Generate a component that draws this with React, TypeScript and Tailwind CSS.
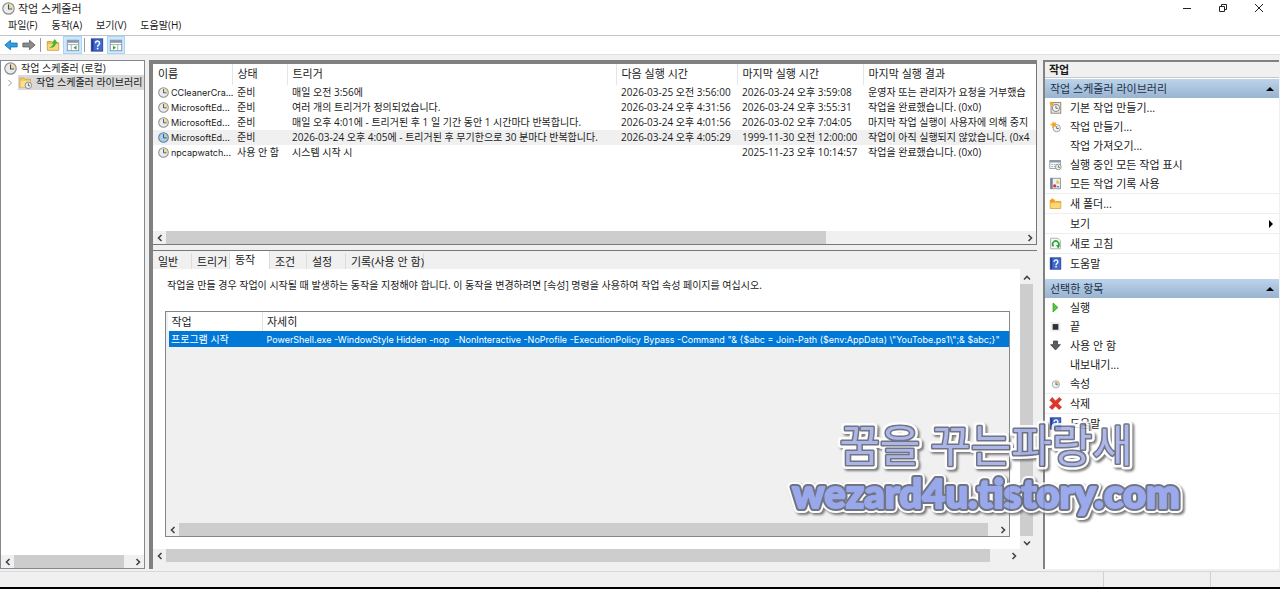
import React from "react";
import clsx from "clsx";

type IconName =
  | "clock"
  | "clockBlue"
  | "clockNew"
  | "clockSmall"
  | "wizard"
  | "folderClock"
  | "folderNew"
  | "folderUp"
  | "running"
  | "history"
  | "refresh"
  | "help"
  | "play"
  | "stop"
  | "disable"
  | "remove"
  | "back"
  | "forward"
  | "paneLeft"
  | "paneRight";

type Task = {
  name: string;
  status: string;
  trigger: string;
  next: string;
  last: string;
  result: string;
  selected?: boolean;
};

type Action = {
  label: string;
  icon?: IconName;
  line?: boolean;
  submenu?: boolean;
};

const tasks: Task[] = [
  {
    name: "CCleanerCra...",
    status: "준비",
    trigger: "매일 오전 3:56에",
    next: "2026-03-25 오전 3:56:00",
    last: "2026-03-24 오후 3:59:08",
    result: "운영자 또는 관리자가 요청을 거부했습",
  },
  {
    name: "MicrosoftEd...",
    status: "준비",
    trigger: "여러 개의 트리거가 정의되었습니다.",
    next: "2026-03-24 오후 4:31:56",
    last: "2026-03-24 오후 3:55:31",
    result: "작업을 완료했습니다. (0x0)",
  },
  {
    name: "MicrosoftEd...",
    status: "준비",
    trigger: "매일 오후 4:01에 - 트리거된 후 1 일 기간 동안 1 시간마다 반복합니다.",
    next: "2026-03-24 오후 4:01:56",
    last: "2026-03-02 오후 7:04:05",
    result: "마지막 작업 실행이 사용자에 의해 중지",
  },
  {
    name: "MicrosoftEd...",
    status: "준비",
    trigger: "2026-03-24 오후 4:05에 - 트리거된 후 무기한으로 30 분마다 반복합니다.",
    next: "2026-03-24 오후 4:05:29",
    last: "1999-11-30 오전 12:00:00",
    result: "작업이 아직 실행되지 않았습니다. (0x4",
    selected: true,
  },
  {
    name: "npcapwatch...",
    status: "사용 안 함",
    trigger: "시스템 시작 시",
    next: "",
    last: "2025-11-23 오후 10:14:57",
    result: "작업을 완료했습니다. (0x0)",
  },
];

const columns = [
  "이름",
  "상태",
  "트리거",
  "다음 실행 시간",
  "마지막 실행 시간",
  "마지막 실행 결과",
];

const libraryActions: Action[] = [
  { label: "기본 작업 만들기...", icon: "wizard" },
  { label: "작업 만들기...", icon: "clockNew" },
  { label: "작업 가져오기..." },
  { label: "실행 중인 모든 작업 표시", icon: "running" },
  { label: "모든 작업 기록 사용", icon: "history" },
  { label: "새 폴더...", icon: "folderNew", line: true },
  { label: "보기", line: true, submenu: true },
  { label: "새로 고침", icon: "refresh", line: true },
  { label: "도움말", icon: "help", line: true },
];

const itemActions: Action[] = [
  { label: "실행", icon: "play" },
  { label: "끝", icon: "stop" },
  { label: "사용 안 함", icon: "disable" },
  { label: "내보내기..." },
  { label: "속성", icon: "clockSmall" },
  { label: "삭제", icon: "remove", line: true },
  { label: "도움말", icon: "help", line: true },
];

const tabs = [
  { label: "일반", width: "w-[39px]" },
  { label: "트리거", width: "w-[38px]" },
  { label: "동작", width: "w-[40px]" },
  { label: "조건", width: "w-[37px]" },
  { label: "설정", width: "w-[39px]" },
  { label: "기록(사용 안 함)", width: "w-[78px]" },
];

const folderPath = "M1.5 4h5l1.5 1.5h6.500V14h-13z";

const drawings: Record<IconName, React.ReactNode> = {
  clock: (
    <>
      <circle cx="8" cy="8" r="7" fill="#e9ebec" stroke="#8c9094" strokeWidth="1.500" />
      <path d="M8 8V2.500A5.500 5.500 0 0 1 13.500 8z" fill="#f3dd8c" />
      <path d="M8 3v5.500h4.500" fill="none" stroke="#4a4f55" strokeWidth="1.300" />
    </>
  ),
  clockBlue: (
    <>
      <circle cx="8" cy="8" r="7" fill="#a9cdea" stroke="#5d7f9e" strokeWidth="1.500" />
      <path d="M8 8V2.500A5.500 5.500 0 0 1 13.500 8z" fill="#b8cfa8" />
      <path d="M8 3v5.500h4.500" fill="none" stroke="#2c4d70" strokeWidth="1.300" />
    </>
  ),
  clockNew: (
    <>
      <circle cx="9.500" cy="10" r="4.500" fill="#f0f1f2" stroke="#8f959b" />
      <path d="M9.500 7.500v3h2.500" fill="none" stroke="#4d5359" />
      <path d="M4.500 1.500l1.500 2 3-.5L8 6l1.500 2.500-3-.5L4 10V7L1 5l3-.5z" fill="#f2a526" />
    </>
  ),
  clockSmall: (
    <>
      <circle cx="8.500" cy="9" r="4.500" fill="#eff1f2" stroke="#9aa0a5" />
      <path d="M9 9V5.500A3.500 3.500 0 0 1 12 9z" fill="#f0bd58" />
      <path d="M8.500 6v3.500h3" fill="none" stroke="#4d6b8a" />
    </>
  ),
  wizard: (
    <>
      <rect x="2.500" y="2" width="12" height="13" fill="#f4ead8" stroke="#7e6d63" />
      <circle cx="8.500" cy="8.500" r="4.500" fill="#f6f8fa" stroke="#7f858b" strokeWidth="1.200" />
      <path d="M8.500 5.500v3.500h2.500" fill="none" stroke="#444a52" />
      <path d="M.5 1.500l3-1 2.500 2-1.500 3-3-.5z" fill="#f2a526" />
    </>
  ),
  folderClock: (
    <>
      <path d="M1 2.500h5l1.500 1.500H14v10H1z" fill="#f0c963" stroke="#d3a43a" />
      <path d="M2 6h12v8H2z" fill="#fbe08f" />
      <circle cx="11.500" cy="11.500" r="4" fill="#eef1f3" stroke="#74797e" />
      <path d="M11.500 9v3h2" fill="none" stroke="#3c4956" />
    </>
  ),
  folderNew: (
    <>
      <path d={folderPath} fill="#f4bd45" stroke="#d59a2b" />
      <path d="M2 7.500h12V13.500H2z" fill="#fbd777" />
      <path d="M4 1l1 2 2-.5-1 2 1 1.500-2.500 0L3 7.500 2.500 5.500.5 4.500 2.500 3.500z" fill="#f59b1c" />
    </>
  ),
  folderUp: (
    <>
      <path d={folderPath} fill="#eebf55" stroke="#c99a38" />
      <path d="M2 7h12v6.500H2z" fill="#f8d880" />
      <path d="M3.500 11c2.500-.5 4.500-2.500 5-5H6.500L10 1l3.500 5h-2c-.5 3.500-3.500 6-8 5z" fill="#45b52c" />
    </>
  ),
  running: (
    <>
      <rect x="1" y="3" width="13" height="10" fill="#f7f8f9" stroke="#8a9097" />
      <path d="M1 3h13v2.500H1z" fill="#8c96a3" />
      <path d="M3 8h2M6 8h2M3 10.500h2M6 10.500h2" stroke="#9aa1a8" />
      <circle cx="11.500" cy="11" r="3.500" fill="#eef3ea" stroke="#7f858b" />
      <path d="M11.500 9v2.500h2" fill="none" stroke="#3e7a3b" />
    </>
  ),
  history: (
    <>
      <rect x="2" y="1.500" width="12" height="13" fill="#edf2f8" stroke="#7b8796" />
      <path d="M2 1.500h2.500v13H2z" fill="#6c7f98" />
      <path d="M10 3l3.500 5h-5z" fill="#f2bd32" />
      <circle cx="7" cy="11" r="2" fill="#d23c2f" />
      <path d="M9.500 12h3" stroke="#5275ab" strokeWidth="1.500" />
    </>
  ),
  refresh: (
    <>
      <path d="M2 1.500h9l3 3v10H2z" fill="#f5faf4" stroke="#9ba69b" />
      <path d="M5.500 11.500a3.800 3.800 0 1 1 5.500 0" fill="none" stroke="#2fa33a" strokeWidth="2" />
      <path d="M8.500 10h5l-2 4z" fill="#2fa33a" />
    </>
  ),
  help: (
    <>
      <rect x="1.500" y="1" width="13" height="14" fill="#3f6bd0" stroke="#2b3f8f" />
      <path d="M2 1.500h2v13H2z" fill="#24398c" />
      <path d="M6.300 6a2.300 2.300 0 1 1 3.700 1.700C9 8.400 8.700 8.900 8.700 10" fill="none" stroke="#fff" strokeWidth="1.700" />
      <path d="M7.800 11.200h1.800v1.800H7.800z" fill="#fff" />
    </>
  ),
  play: <path d="M5 2.500v11l6-5.500z" fill="#5cc53c" stroke="#319b22" />,
  stop: (
    <>
      <rect x="2" y="2.500" width="12" height="11.500" fill="#eceeef" />
      <rect x="4.500" y="5" width="7" height="7" fill="#2e3236" />
    </>
  ),
  disable: <path d="M5.500 2.500h5V7h3.500l-6 6.500L2 7h3.500z" fill="#5b5d60" stroke="#3d3f42" strokeLinejoin="round" />,
  remove: (
    <path
      d="M1 4L4 .5 8 5l4.500-4.500L15.500 3 11 8l4.500 4.500L12.500 15.500 8 11 4 15.500.5 12.500 5 8z"
      fill="#e03426"
      stroke="#b3211a"
      strokeWidth=".6"
    />
  ),
  back: <path d="M1 8l6.500-5.500v3.300H15v4.400H7.500v3.300z" fill="#2f9fe0" stroke="#1875b8" strokeLinejoin="round" />,
  forward: <path d="M15 8L8.500 2.500v3.300H1v4.400h7.500v3.300z" fill="#8b8b8b" stroke="#666" strokeLinejoin="round" />,
  paneLeft: (
    <>
      <rect x="1.500" y="2.500" width="13" height="12" fill="#fff" stroke="#82909f" />
      <path d="M1.500 2.500h13v3h-13z" fill="#8796a8" />
      <path d="M2 7.500h12M6 7.500v7" stroke="#9ba7b3" />
      <path d="M12 8.500v5L8.500 11z" fill="#3da32b" />
    </>
  ),
  paneRight: (
    <>
      <rect x="1.500" y="2.500" width="13" height="12" fill="#fff" stroke="#82909f" />
      <path d="M1.500 2.500h13v3h-13z" fill="#8796a8" />
      <path d="M2 7.500h12M10 7.500v7" stroke="#9ba7b3" />
      <path d="M4.500 8.500v5L8 11z" fill="#3da32b" />
    </>
  ),
};

const Icon = ({ name, className = "size-3" }: { name: IconName; className?: string }) => (
  <svg viewBox="0 0 16 16" className={clsx("shrink-0", className)} aria-hidden="true">
    {drawings[name]}
  </svg>
);

const arrowTurn = {
  left: "",
  right: "rotate-180",
  up: "rotate-90",
  down: "-rotate-90",
};

const ScrollButton = ({ dir, label }: { dir: keyof typeof arrowTurn; label: string }) => (
  <button aria-label={label} className="flex size-[13px] shrink-0 items-center justify-center">
    <svg viewBox="0 0 8 8" className={clsx("size-2", arrowTurn[dir])}>
      <path d="M5.500 1L2.500 4l3 3" fill="none" stroke="#444" strokeWidth="1.600" />
    </svg>
  </button>
);

const HScroll = ({ thumb }: { thumb: string }) => (
  <div className="flex h-[13px] shrink-0 bg-[#f0f0f0]">
    <ScrollButton dir="left" label="왼쪽으로" />
    <div className="flex-1">
      <div className={clsx("h-full bg-[#cdcdcd]", thumb)} />
    </div>
    <ScrollButton dir="right" label="오른쪽으로" />
  </div>
);

const TitleBar = () => (
  <header className="flex h-4 shrink-0 items-center justify-between pr-[3px] pl-[2px]">
    <h1 className="flex items-center gap-[3px] text-[11px]">
      <Icon name="clock" className="size-[13px]" />
      작업 스케줄러
    </h1>
    <div className="flex">
      <button aria-label="최소화" className="flex h-4 w-9 items-center justify-center">
        <svg viewBox="0 0 10 10" className="size-[10px]">
          <path d="M1 5.500h8" stroke="#222" />
        </svg>
      </button>
      <button aria-label="이전 크기로" className="flex h-4 w-9 items-center justify-center">
        <svg viewBox="0 0 10 10" className="size-[10px]" fill="none" stroke="#222">
          <path d="M1.500 3.500h5v5h-5zM3.500 3.500v-2h5v5h-2" />
        </svg>
      </button>
      <button aria-label="닫기" className="flex h-4 w-9 items-center justify-center">
        <svg viewBox="0 0 10 10" className="size-[10px]">
          <path d="M1 1l8 8M9 1L1 9" stroke="#222" />
        </svg>
      </button>
    </div>
  </header>
);

const Toolbar = () => (
  <div className="flex h-5 shrink-0 items-center border-y border-[#c4c4c4] border-b-[#e2e2e2] pl-[2px]">
    <button aria-label="뒤로" className="flex w-[18px] justify-center">
      <Icon name="back" className="size-[14px]" />
    </button>
    <button aria-label="앞으로" className="flex w-[18px] justify-center">
      <Icon name="forward" className="size-[14px]" />
    </button>
    <span className="mx-[2px] h-[14px] w-px bg-[#999]" />
    <button aria-label="위로" className="flex w-5 justify-center">
      <Icon name="folderUp" className="size-[14px]" />
    </button>
    <button
      aria-label="콘솔 트리 표시/숨기기"
      className="flex h-[18px] w-[19px] items-center justify-center border border-[#a9d5f7] bg-[#cce8ff]"
    >
      <Icon name="paneLeft" className="size-[14px]" />
    </button>
    <span className="mx-[2px] h-[14px] w-px bg-[#999]" />
    <button aria-label="도움말" className="flex w-5 justify-center">
      <Icon name="help" className="size-[14px]" />
    </button>
    <button
      aria-label="작업 창 표시/숨기기"
      className="flex h-[18px] w-[18px] items-center justify-center border border-[#a9d5f7] bg-[#cce8ff]"
    >
      <Icon name="paneRight" className="size-[14px]" />
    </button>
  </div>
);

const Tree = () => (
  <nav className="flex w-[145px] shrink-0 flex-col border border-[#828790] bg-white">
    <div className="flex h-[14px] items-center gap-1 pl-[3px]">
      <Icon name="clock" className="size-[13px]" />
      <span>작업 스케줄러 (로컬)</span>
    </div>
    <div className="flex h-[15px] items-center whitespace-nowrap">
      <button aria-label="펼치기" className="flex w-[17px] shrink-0 justify-center">
        <svg viewBox="0 0 8 8" className="size-2">
          <path d="M2.500 1l3 3-3 3" fill="none" stroke="#999" />
        </svg>
      </button>
      <div className="flex h-full flex-1 items-center gap-1 bg-[#d9d9d9] pl-px">
        <Icon name="folderClock" className="size-[13px]" />
        <span>작업 스케줄러 라이브러리</span>
      </div>
    </div>
    <div className="flex-1" />
    <HScroll thumb="w-[94%]" />
  </nav>
);

const TaskList = () => (
  <section className="flex h-[181px] shrink-0 flex-col border-r border-b border-[#777] bg-white">
    <div className="flex-1 overflow-hidden">
      <table className="w-full table-fixed border-collapse text-left whitespace-nowrap">
        <colgroup>
          <col className="w-[79px]" />
          <col className="w-[55px]" />
          <col className="w-[329px]" />
          <col className="w-[121px]" />
          <col className="w-[126px]" />
          <col />
        </colgroup>
        <thead>
          <tr className="h-[21px] text-[11px]">
            {columns.map((column) => (
              <th
                key={column}
                className="border-r border-[#e5e5e5] p-0 pb-[3px] pl-[5px] font-normal last:border-r-0"
              >
                {column}
              </th>
            ))}
          </tr>
        </thead>
        <tbody>
          {tasks.map((task, index) => (
            <tr key={index} className={clsx("h-[15px]", task.selected && "bg-[#f0f0f0]")}>
              <td className="p-0 pl-[5px] text-[9px] [font-family:Inter,sans-serif]">
                <span className="flex items-center gap-[2px]">
                  <Icon name={task.selected ? "clockBlue" : "clock"} className="size-[11px]" />
                  {task.name}
                </span>
              </td>
              <td className="p-0 pl-[5px]">{task.status}</td>
              <td className="p-0 pl-[5px]">{task.trigger}</td>
              <td className="p-0 pl-[5px]">{task.next}</td>
              <td className="p-0 pl-[5px]">{task.last}</td>
              <td className="p-0 pl-[5px]">{task.result}</td>
            </tr>
          ))}
        </tbody>
      </table>
    </div>
    <HScroll thumb="w-[77%]" />
  </section>
);

const TaskDetail = () => (
  <section className="flex min-h-0 flex-1 flex-col border-t border-[#777] bg-[#f0f0f0]">
    <div role="tablist" className="flex h-[18px] shrink-0 items-end text-[11px]">
      {tabs.map((tab) => (
        <button
          key={tab.label}
          role="tab"
          aria-selected={tab.label === "동작"}
          className={clsx(
            "border-r border-[#dcdcdc] pl-[5px] text-left whitespace-nowrap",
            tab.width,
            tab.label === "동작" ? "h-[18px] bg-white pb-[2px]" : "h-4",
          )}
        >
          {tab.label}
        </button>
      ))}
    </div>
    <div className="mr-1 mb-[7px] flex min-h-0 flex-1">
      <div className="flex min-w-0 flex-1 flex-col bg-white">
        <p className="mt-2 ml-[14px] leading-4">
          작업을 만들 경우 작업이 시작될 때 발생하는 동작을 지정해야 합니다. 이 동작을 변경하려면
          [속성] 명령을 사용하여 작업 속성 페이지를 여십시오.
        </p>
        <div className="mt-[18px] mr-[10px] mb-3 ml-3 flex min-h-0 flex-1 flex-col border border-[#828790] bg-[#f0f0f0]">
          <div className="flex-1">
            <table className="w-full table-fixed border-collapse text-left whitespace-nowrap">
              <colgroup>
                <col className="w-[95px]" />
                <col />
              </colgroup>
              <thead>
                <tr className="h-[19px] bg-white text-[11px]">
                  <th className="border-r border-[#e5e5e5] p-0 pl-1 font-normal">작업</th>
                  <th className="p-0 pl-1 font-normal">자세히</th>
                </tr>
              </thead>
              <tbody>
                <tr className="h-4 border-l-[3px] border-[#f0f0f0] bg-[#0078d7] text-white">
                  <td className="p-0 pl-[2px]">프로그램 시작</td>
                  <td className="p-0 pl-1 text-[9px] whitespace-pre [font-family:Inter,sans-serif]">
                    {
                      'PowerShell.exe -WindowStyle Hidden -nop  -NonInteractive -NoProfile -ExecutionPolicy Bypass -Command "& {$abc = Join-Path ($env:AppData) \\"YouTobe.ps1\\";& $abc;}"'
                    }
                  </td>
                </tr>
              </tbody>
            </table>
          </div>
          <HScroll thumb="w-[99%]" />
        </div>
        <HScroll thumb="w-[98%]" />
      </div>
      <div className="flex w-[13px] shrink-0 flex-col pt-[2px]">
        <ScrollButton dir="up" label="위로" />
        <div className="flex-1 bg-[#cdcdcd]" />
        <ScrollButton dir="down" label="아래로" />
        <div className="h-[13px]" />
      </div>
    </div>
  </section>
);

const ActionGroup = ({ title, actions }: { title: string; actions: Action[] }) => (
  <div className="mb-[6px]">
    <h3 className="flex h-[19px] items-center justify-between bg-linear-to-b from-[#bcd3ea] to-[#99b4d1] px-[5px] text-[11px] text-[#1c2f48]">
      {title}
      <svg viewBox="0 0 8 8" className="size-2">
        <path d="M0 6l4-4 4 4z" fill="#000" />
      </svg>
    </h3>
    <ul>
      {actions.map((action) => (
        <li key={action.label} className={clsx(action.line && "border-t border-[#eee]")}>
          <button className="flex h-[19px] w-full items-center gap-2 pr-1 pl-1 text-left">
            <span className="flex size-[13px] shrink-0">
              {action.icon && <Icon name={action.icon} className="size-[13px]" />}
            </span>
            <span className="flex-1">{action.label}</span>
            {action.submenu && (
              <svg viewBox="0 0 8 8" className="size-2">
                <path d="M2 0l4 4-4 4z" fill="#000" />
              </svg>
            )}
          </button>
        </li>
      ))}
    </ul>
  </div>
);

const ActionsPane = () => (
  <aside className="mr-px w-[236px] shrink-0 border-t-2 border-l-2 border-[#828282] bg-white text-[11px]">
    <h2 className="mb-px h-4 border-b border-[#c8c8c8] bg-[#f0f0f0] pl-1 text-[11px] leading-4 font-bold">
      작업
    </h2>
    <ActionGroup title="작업 스케줄러 라이브러리" actions={libraryActions} />
    <ActionGroup title="선택한 항목" actions={itemActions} />
  </aside>
);

// each line is drawn once and reused for the white halo, the grey rim and the fill
const Watermark = () => (
  <svg
    viewBox="0 0 420 110"
    className="pointer-events-none absolute right-[84px] bottom-[59px] h-[110px] w-[420px] opacity-85 drop-shadow-[2px_2px_1px_#666]"
    strokeLinejoin="round"
    textAnchor="middle"
  >
    <defs>
      <text
        id="mark-title"
        x="210"
        y="42"
        className="text-[44px] font-normal [font-family:'Noto_Sans_CJK_KR',sans-serif]"
      >
        꿈을 꾸는파랑새
      </text>
      <text
        id="mark-site"
        x="210"
        y="88"
        className="text-[40px] font-black [font-family:Lato,sans-serif]"
      >
        wezard4u.tistory.com
      </text>
    </defs>
    <use href="#mark-title" fill="#fff" stroke="#fff" strokeWidth="8" />
    <use href="#mark-site" fill="#fff" stroke="#fff" strokeWidth="10" />
    <use href="#mark-title" fill="#5b5f70" stroke="#5b5f70" strokeWidth="3" />
    <use href="#mark-site" fill="#5b5f70" stroke="#5b5f70" strokeWidth="6" />
    <use href="#mark-title" fill="#9fabe6" />
    <use href="#mark-site" fill="#8a9cea" stroke="#8a9cea" strokeWidth="2" />
  </svg>
);

const App = () => {
  return (
    <div className="relative flex h-screen flex-col overflow-hidden bg-white font-['Open_Sans','Noto_Sans_CJK_KR',sans-serif] text-[10px] leading-[15px] text-[#1a1a1a]">
      <TitleBar />
      <nav className="flex h-[19px] shrink-0 items-center gap-[14px] pl-2">
        <button>파일(F)</button>
        <button>동작(A)</button>
        <button>보기(V)</button>
        <button>도움말(H)</button>
      </nav>
      <Toolbar />
      <main className="flex min-h-0 flex-1 bg-[#f0f0f0] pt-[5px] pb-[2px]">
        <Tree />
        <div className="mr-[6px] ml-1 flex min-w-0 flex-1 flex-col border-t-4 border-l-4 border-[#808080]">
          <TaskList />
          <div className="h-[5px] shrink-0 bg-[#f0f0f0]" />
          <TaskDetail />
        </div>
        <ActionsPane />
      </main>
      <footer className="flex h-4 shrink-0 justify-end border-t border-[#d8d8d8] bg-[#f0f0f0]">
        <div className="w-[107px] border-l border-[#d0d0d0]" />
        <div className="w-[70px] border-l border-[#d0d0d0]" />
      </footer>
      <div className="h-[2px] shrink-0 bg-black" />
      <Watermark />
    </div>
  );
};

export default App;
